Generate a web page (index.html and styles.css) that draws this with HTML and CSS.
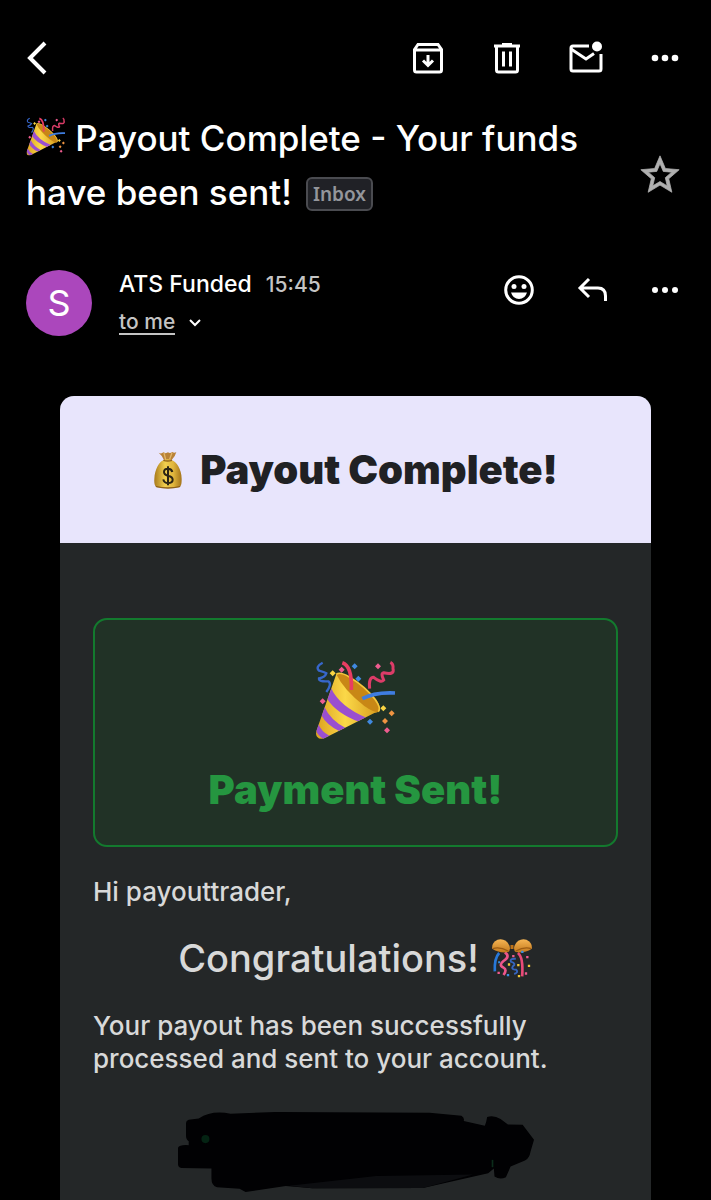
FILE: index.html
```html
<!DOCTYPE html>
<html lang="en">

<head>
  <meta charset="UTF-8">
  <meta name="viewport" content="width=device-width, initial-scale=1.0">
  <title>Payout Complete - Your funds have been sent!</title>
  <link rel="stylesheet" href="styles.css">
</head>

<body>
  <!-- shared drawings -->
  <svg class="defs" width="0" height="0" aria-hidden="true">
    <defs>
      <linearGradient id="gold" x1="0" y1="0" x2="1" y2="0">
        <stop offset="0" stop-color="#d99c1c" />
        <stop offset="0.45" stop-color="#fbd848" />
        <stop offset="1" stop-color="#d29418" />
      </linearGradient>
      <linearGradient id="bag" x1="0" y1="0" x2="1" y2="0">
        <stop offset="0" stop-color="#a87a1c" />
        <stop offset="0.4" stop-color="#f2cf4f" />
        <stop offset="0.7" stop-color="#e0b53c" />
        <stop offset="1" stop-color="#a4741a" />
      </linearGradient>
      <linearGradient id="shell" x1="0" y1="0" x2="0" y2="1">
        <stop offset="0" stop-color="#f6b554" />
        <stop offset="1" stop-color="#c47a1c" />
      </linearGradient>
      <clipPath id="cone">
        <path d="M108 74Q112 68 132 76L196 118Q238 152 239 180Q238 190 222 191L78 264Q60 274 50 262Q44 254 50 240Z" />
      </clipPath>
      <symbol id="popper" viewBox="44 32 246 246">
        <g clip-path="url(#cone)">
          <path d="M40 60h210v220H40z" fill="url(#gold)" />
          <path d="M92 116Q118 172 200 206L178 218Q108 192 80 148Z" fill="#9a4fd0" />
          <path d="M72 172Q90 212 136 236L118 246Q78 226 62 196Z" fill="#9a4fd0" />
          <path d="M54 224Q62 246 88 260L74 272Q50 258 46 240Z" fill="#9a4fd0" />
        </g>
        <path d="M108 75Q118 66 146 82Q196 112 224 150Q244 178 234 187Q224 192 192 170Q130 122 108 75Z" fill="#c88716" />
        <path d="M108 75Q118 66 146 82Q196 112 224 150Q244 178 234 187" fill="none" stroke="#f4c63c" stroke-width="5" />
        <path d="M126 40Q156 50 153 122" fill="none" stroke="#e83d62" stroke-width="11" />
        <path d="M186 148Q222 128 284 131" fill="none" stroke="#3f7de0" stroke-width="11" />
        <path d="M67 40Q44 52 56 64Q72 68 78 72Q74 84 56 87Q54 98 84 96Q96 104 78 128" fill="none" stroke="#3767cb" stroke-width="7" />
        <path d="M208 118Q204 84 220 84Q242 102 250 92Q240 72 250 70Q284 78 278 58Q280 44 270 39" fill="none" stroke="#dc3c68" stroke-width="9" />
        <g fill="#4089df">
          <path d="M163 42l9 9-9 9-9-9zM174 79l9 9-9 9-9-9zM209 208l9 9-9 9-9-9z" />
        </g>
        <g fill="#ee5c8f">
          <path d="M124 52l9 9-9 9-9-9zM233 42l9 9-9 9-9-9zM67 147l9 9-9 9-9-9zM260 234l9 9-9 9-9-9z" />
        </g>
        <g fill="#f9d443">
          <path d="M97 63l9 9-9 9-9-9zM249 168l9 9-9 9-9-9z" />
        </g>
        <path d="M274 183l9 9-9 9-9-9zM254 206l9 9-9 9-9-9z" fill="#ef9441" />
      </symbol>
    </defs>
  </svg>

  <nav class="toolbar">
    <button class="icon-btn back" aria-label="Back">
      <svg viewBox="0 0 40 40"><path d="M29 5L14 20l15 15" class="line thick" /></svg>
    </button>
    <button class="icon-btn" aria-label="Archive">
      <svg viewBox="0 0 40 40">
        <path d="M6.500 11.500L10 6.500h20l3.500 5V32a2 2 0 0 1-2 2h-23a2 2 0 0 1-2-2zM6.500 12h27" class="line" />
        <path d="M20 17v10M15 22.500l5 5 5-5" class="line" />
      </svg>
    </button>
    <button class="icon-btn" aria-label="Delete">
      <svg viewBox="0 0 40 40">
        <path d="M7 8h26M15 6.500h10M9.500 8v24a2 2 0 0 0 2 2h17a2 2 0 0 0 2-2V8" class="line" />
        <path d="M16.500 13.500v15M23.500 13.500v15" class="line" />
      </svg>
    </button>
    <button class="icon-btn" aria-label="Mark as unread">
      <svg viewBox="0 0 40 40">
        <path d="M23 8H7a2 2 0 0 0-2 2v21a2 2 0 0 0 2 2h26a2 2 0 0 0 2-2V16" class="line" />
        <path d="M5 11l15 10 8-5.500" class="line" />
        <circle cx="31" cy="8.500" r="5" />
      </svg>
    </button>
    <button class="icon-btn" aria-label="More options">
      <svg viewBox="0 0 40 40"><circle cx="10" cy="20" r="3.300" /><circle cx="20" cy="20" r="3.300" /><circle cx="30" cy="20" r="3.300" /></svg>
    </button>
  </nav>

  <header class="subject">
    <div class="subject-text">
      <h1><svg class="emoji" role="img" aria-label="Party popper"><use href="#popper" /></svg> Payout Complete - Your funds have been sent!</h1><span class="label">Inbox</span>
    </div>
    <button class="star" aria-label="Star">
      <svg viewBox="0 0 24 24"><path d="M22 9.240l-7.190-.620L12 2 9.190 8.630 2 9.240l5.460 4.730L5.820 21 12 17.270 18.180 21l-1.630-7.030L22 9.240zM12 15.400l-3.760 2.270 1-4.280-3.320-2.880 4.380-.380L12 6.100l1.710 4.040 4.380.380-3.320 2.880 1 4.280L12 15.400z" /></svg>
    </button>
  </header>

  <section class="sender">
    <div class="avatar">S</div>
    <div class="who">
      <div class="from">ATS Funded <time>15:45</time></div>
      <button class="to"><span>to me</span><svg viewBox="0 0 12 8"><path d="M1 1l5 5 5-5" /></svg></button>
    </div>
    <div class="actions">
      <button class="icon-btn" aria-label="Add reaction">
        <svg viewBox="0 0 40 40">
          <circle cx="20" cy="20" r="13.300" class="line" />
          <circle cx="15" cy="16.500" r="2.500" /><circle cx="25" cy="16.500" r="2.500" />
          <path d="M12 22.500h16Q26 29 20 29T12 22.500z" />
        </svg>
      </button>
      <button class="icon-btn" aria-label="Reply">
        <svg viewBox="0 0 40 40"><path d="M17 9l-9 9 9 9M8 18h18q7.500 0 7.500 8v5" class="line" /></svg>
      </button>
      <button class="icon-btn" aria-label="More message options">
        <svg viewBox="0 0 40 40"><circle cx="10" cy="20" r="3" /><circle cx="20" cy="20" r="3" /><circle cx="30" cy="20" r="3" /></svg>
      </button>
    </div>
  </section>

  <main class="card">
    <div class="card-head">
      <svg class="moneybag" viewBox="50 33 88 114" role="img" aria-label="Money bag">
        <path d="M66 38q8 5 14-1 7 5 14 0 6 5 13-1 6 4 12 0-3 13-14 24H82Q78 48 66 38z" fill="#b98236" />
        <path d="M82 39l5 20M106 38l-7 20" stroke="#e2b568" stroke-width="4" />
        <path d="M80 61q14-6 26 0c12 4 29 26 29 56 0 14-1 20-6 24q-34 8-70 0c-5-4-7-12-6-24 1-30 16-52 27-56z" fill="url(#bag)" />
        <path d="M56 137q38 10 76 0l-3 5q-35 8-70 0z" fill="#8e6018" />
        <path d="M80 61q13 4 26 0" fill="none" stroke="#94651c" stroke-width="4" />
        <path d="M107 96q-2-10-13-10-12 0-12 10 0 8 12 11 14 3 14 12 0 10-14 10-12 0-14-11M94 79v57" fill="none" stroke="#2b2415" stroke-width="6" />
      </svg>
      <h2>Payout Complete!</h2>
    </div>
    <div class="card-body">
      <div class="banner">
        <svg class="emoji-big" role="img" aria-label="Party popper"><use href="#popper" /></svg>
        <h2>Payment Sent!</h2>
      </div>
      <p>Hi payouttrader,</p>
      <h3>
        Congratulations!
        <svg class="confetti" viewBox="33 35 125 120" role="img" aria-label="Confetti ball">
          <g fill="none" stroke-width="8">
            <path d="M57 80Q42 96 44 135" stroke="#2878d8" />
            <path d="M74 78Q92 90 70 104Q54 116 70 124Q82 130 70 146" stroke="#ee558a" />
            <path d="M113 80Q130 92 126 150" stroke="#e84a78" />
            <path d="M107 97Q88 96 92 106Q110 112 98 120Q92 130 108 130Q116 138 102 143" stroke="#3564bd" stroke-width="6" />
          </g>
          <path d="M36 67Q34 48 52 40Q76 34 88 58Q92 72 84 77Q60 82 36 67z" fill="url(#shell)" />
          <path d="M155 67Q157 48 139 40Q115 34 103 58Q99 72 107 77Q131 82 155 67z" fill="url(#shell)" />
          <path d="M38 67Q58 60 84 74M153 67Q133 60 107 74" fill="none" stroke="#9c5b13" stroke-width="4" />
          <rect x="91" y="56" width="9" height="12" fill="#bd7218" />
          <path d="M96 86h7v7h-7zM138 89h7v7h-7zM52 136h7v7h-7zM134 138h7v7h-7z" fill="#ef5c90" />
          <path d="M111 113h7v7h-7zM143 115h7v7h-7zM83 111h7v7h-7zM113 146h7v7h-7z" fill="#f4c83b" />
          <path d="M123 73h7v7h-7zM80 143h7v7h-7zM54 105h6v6h-6z" fill="#398fe0" />
        </svg>
      </h3>
      <p>Your payout has been successfully processed and sent to your account.</p>
      <!-- scribbled-out amount -->
      <svg class="redacted" viewBox="48 66 1064 242" role="img" aria-label="Amount hidden">
        <path d="M80 92L110 88Q150 62 205 74L340 69 800 71 895 80Q905 86 902 96L965 110Q970 98 972 84Q992 78 1012 90L1034 106 1078 107 1112 152 1102 186Q1098 208 1085 214L1042 232 1028 264Q1010 272 994 262L992 238 975 252 780 296 450 297 370 290 250 308 232 298 165 294Q148 290 148 268V238L58 236Q48 234 48 224V176Q52 166 80 168L80 156Q72 152 72 140V102Q72 94 80 92z" fill="#010103" />
        <path d="M380 289L640 260 930 256 780 296 450 297z" fill="#0c0d10" />
        <circle cx="130" cy="150" r="12" fill="#042313" />
        <path d="M988 212v22" stroke="#0b2c1a" stroke-width="5" />
      </svg>
    </div>
  </main>
</body>

</html>
```
FILE: styles.css
```css
* {
  box-sizing: border-box;
}

body {
  margin: 0;
  min-height: 100vh;
  display: flex;
  flex-direction: column;
  background: #000;
  color: #fff;
  font-family: Inter, "Liberation Sans", sans-serif;
}

h1,
h2,
h3,
p {
  margin: 0;
}

button {
  padding: 0;
  border: 0;
  background: none;
  color: inherit;
  font: inherit;
  cursor: pointer;
}

svg {
  fill: currentColor;
}

.defs {
  position: absolute;
}

.icon-btn {
  width: 40px;
  height: 40px;
  flex: none;
}

.icon-btn svg {
  display: block;
  width: 40px;
  height: 40px;
}

.line {
  fill: none;
  stroke: currentColor;
  stroke-width: 3;
}

.line.thick {
  stroke-width: 4;
}

/* top bar */
.toolbar {
  display: flex;
  gap: 39px;
  padding: 38px 26px 0 16px;
}

.toolbar .back {
  margin-right: auto;
}

/* subject line */
.subject {
  display: flex;
  align-items: center;
  justify-content: space-between;
  padding: 33px 26px 0;
}

.subject-text {
  max-width: 570px;
  font-size: 35px;
  line-height: 54px;
}

.subject h1 {
  display: inline;
  font-size: 35px;
  font-weight: 500;
}

.emoji {
  width: 40px;
  height: 40px;
  vertical-align: -6px;
}

.label {
  display: inline-block;
  margin-left: 14px;
  padding: 0 5px;
  border: 2px solid #4a4b50;
  border-radius: 6px;
  background: #202126;
  color: #94969b;
  font-family: "Noto Sans", sans-serif;
  font-size: 19px;
  font-weight: 600;
  line-height: 30px;
  vertical-align: 4px;
}

.star {
  width: 50px;
  height: 50px;
  flex: none;
  margin-top: 20px;
  color: #b0b0b0;
}

.star svg {
  display: block;
  width: 46px;
  height: 46px;
  margin: 0 auto;
  stroke: currentColor;
  stroke-width: 0.4;
}

/* sender row */
.sender {
  display: flex;
  gap: 27px;
  padding: 51px 26px 0;
}

.avatar {
  width: 66px;
  height: 66px;
  flex: none;
  border-radius: 50%;
  background: #ab47bc;
  font-size: 36px;
  line-height: 66px;
  text-align: center;
}

.who {
  flex: 1;
}

.from {
  font-size: 23px;
  font-weight: 500;
  line-height: 28px;
}

.from time {
  margin-left: 8px;
  color: #c4c4c4;
  font-size: 21px;
}

.to {
  display: flex;
  align-items: center;
  gap: 14px;
  margin-top: 12px;
  color: #c4c4c4;
  font-size: 21px;
  font-weight: 500;
}

.to span {
  border-bottom: 2px solid #c4c4c4;
  line-height: 22px;
}

.to svg {
  width: 12px;
  height: 8px;
  fill: none;
  stroke: #fff;
  stroke-width: 2;
}

.actions {
  display: flex;
  gap: 33px;
}

/* mail content */
.card {
  flex: 1;
  margin: 60px 60px 0;
  border-radius: 14px 14px 0 0;
  overflow: hidden;
  background: #242728;
  color: #d8d9d9;
}

.card-head {
  display: flex;
  align-items: center;
  justify-content: center;
  gap: 17px;
  padding: 50px 20px;
  background: #e8e5fc;
  color: #202124;
}

.card h2 {
  font-size: 40px;
  font-weight: 900;
  line-height: 47px;
}

.moneybag {
  width: 30px;
  height: 38px;
}

.card-body {
  padding: 75px 33px 8px;
}

.banner {
  padding: 40px 20px 32px;
  border: 2px solid #137a2e;
  border-radius: 14px;
  background: #213226;
  text-align: center;
}

.banner h2 {
  margin-top: 24px;
  color: #259640;
}

.emoji-big {
  display: block;
  width: 82px;
  height: 82px;
  margin: 0 auto;
}

.card p {
  font-size: 26px;
  font-weight: 500;
  line-height: 33px;
}

.banner + p {
  margin-top: 28px;
}

.card h3 {
  display: flex;
  align-items: center;
  justify-content: center;
  gap: 12px;
  margin: 26px 0 27px;
  font-size: 38px;
  font-weight: 500;
  line-height: 48px;
}

.confetti {
  width: 42px;
  height: 40px;
}

.redacted {
  display: block;
  width: 356px;
  height: 81px;
  margin: 36px auto 0;
}
```
